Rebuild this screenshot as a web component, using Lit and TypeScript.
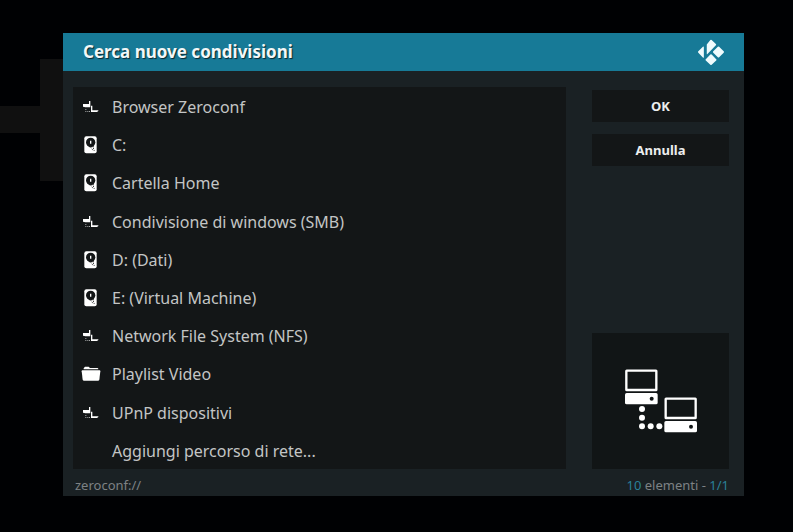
import { LitElement, html, svg, css, nothing } from "lit";
import { customElement, property, state } from "lit/decorators.js";

type Kind = "network" | "disk" | "folder" | "none";

interface Source {
  label: string;
  kind: Kind;
}

const SOURCES: Source[] = [
  { label: "Browser Zeroconf", kind: "network" },
  { label: "C:", kind: "disk" },
  { label: "Cartella Home", kind: "disk" },
  { label: "Condivisione di windows (SMB)", kind: "network" },
  { label: "D: (Dati)", kind: "disk" },
  { label: "E: (Virtual Machine)", kind: "disk" },
  { label: "Network File System (NFS)", kind: "network" },
  { label: "Playlist Video", kind: "folder" },
  { label: "UPnP dispositivi", kind: "network" },
  { label: "Aggiungi percorso di rete...", kind: "none" },
];

@customElement("source-icon")
export class SourceIcon extends LitElement {
  @property() kind: Kind = "none";

  static styles = css`
    :host { display: block; width: 20px; height: 20px; flex: none; }
    .glyph { display: block; width: 100%; height: 100%; fill: #fff; }
    .hole { fill: #131617; }
    .arm { fill: none; stroke: #131617; stroke-width: 3; stroke-dasharray: 3 3; }
    .faint { fill: #a9abab; }
  `;

  private shape() {
    switch (this.kind) {
      case "network":
        return svg`
          <path d="M6 21h18v-9h4v19H13l-7-2z"/>
          <path d="M30 26h4v14h18v2l-4 3H30z"/>
          <path class="faint" d="M13 36h3v3h-3zM13 42h3v3h-3zM19 42h3v3h-3zM24 42h3v3h-3z"/>`;
      case "disk":
        return svg`
          <rect x="10" y="4" width="37" height="51" rx="6"/>
          <circle class="hole" cx="29" cy="22" r="14"/>
          <path d="M27 17h4v9h-4z"/>
          <path class="arm" d="M24 35h14M29 37l8 10M35 34l5 13"/>`;
      case "folder":
        return svg`
          <path d="M8 16v-3l4-5h11l4 4h22q3 0 3 3v1z"/>
          <path d="M4 19h52q2 0 2 3l-3 25q-1 3-4 3H9q-3 0-4-3L2 22q0-3 2-3z"/>`;
      default:
        return nothing;
    }
  }

  render() {
    return html`<svg class="glyph" viewBox="0 0 60 60" aria-hidden="true">${this.shape()}</svg>`;
  }
}

@customElement("app-root")
export class AppRoot extends LitElement {
  @state() private selected = 0;

  static styles = css`
    :host {
      display: flex;
      position: relative;
      box-sizing: border-box;
      min-height: 100vh;
      padding: 33px 49px 36px 63px;
      background: #000103;
      font-family: "Noto Sans", "Open Sans", sans-serif;
      color: #c3c5c5;
    }
    .backdrop { position: absolute; left: 0; top: 59px; width: 63px; height: 122px; fill: #101010; }
    .dialog { position: relative; display: flex; flex-direction: column; flex: 1; min-width: 0; background: #1a2124; }
    .header {
      display: flex; align-items: center; justify-content: space-between;
      height: 38px; padding: 0 20px; background: #177a97;
    }
    .title { margin: 0; font-size: 17px; line-height: 24px; font-weight: 700; color: #f2f7f8; text-shadow: 1px 1px 1px #08262f; }
    .logo { width: 26px; height: 26px; fill: #f0fbfd; }
    .body {
      display: grid; flex: 1; grid-template-columns: minmax(0, 1fr) 137px;
      column-gap: 26px; padding: 16px 15px 0 10px;
    }
    .list { display: grid; grid-auto-rows: 1fr; margin: 0; padding: 0; list-style: none; background: #131617; }
    .item { display: flex; }
    .row {
      display: flex; align-items: center; gap: 11px; width: 100%;
      padding: 2px 8px 0; border: 0; background: none; color: inherit;
      font: 16px/24px "Noto Sans", "Open Sans", sans-serif; text-align: left;
    }
    .side { display: flex; flex-direction: column; gap: 12px; padding-top: 3px; }
    .action {
      height: 32px; padding: 0; border: 0; background: #131617; color: #eceeee;
      font: 700 13px/16px "Noto Sans", "Open Sans", sans-serif;
    }
    .preview { display: block; width: 100%; margin-top: auto; background: #111516; fill: #fff; }
    .screen { fill: none; stroke: #fff; stroke-width: 7; stroke-linejoin: round; }
    .hole { fill: #111516; }
    .footer {
      display: flex; align-items: center; justify-content: space-between;
      height: 27px; padding: 4px 15px 0 12px; box-sizing: border-box;
      font-size: 13px; line-height: 20px; color: #7d8284;
    }
    .accent { color: #2a8098; }
  `;

  private computer(x: number, y: number) {
    return svg`
      <rect class="screen" x=${x + 4} y=${y + 4} width="90" height="58" rx="1"/>
      <rect x=${x} y=${y + 71} width="98" height="34" rx="5"/>
      <circle class="hole" cx=${x + 80} cy=${y + 88} r="6"/>`;
  }

  render() {
    return html`
      <svg class="backdrop" viewBox="0 0 63 122" aria-hidden="true">
        <path d="M40 0h23v122H40V74H0V47h40z"/>
      </svg>
      <section class="dialog" role="dialog" aria-labelledby="title">
        <header class="header">
          <h1 class="title" id="title">Cerca nuove condivisioni</h1>
          <svg class="logo" viewBox="0 0 80 80" aria-hidden="true">
            <path d="M15 24q3-2 3 1v31q0 3-3 1L1 42q-2-2 0-4z"/>
            <path d="M27 17L38 3q2-2 4 0l13 12q2 2 0 4L29 46q-2 2-2-1z"/>
            <path d="M61 24q2-2 4 0l14 14q2 2 0 4L65 56q-2 2-4 0L47 42q-2-2 0-4z"/>
            <path d="M38 48q2-2 4 0l14 14q2 2 0 4L42 79q-2 2-4 0L24 66q-2-2 0-4z"/>
          </svg>
        </header>
        <div class="body">
          <ul class="list">
            ${SOURCES.map(
              (source, index) => html`
                <li class="item">
                  <button class="row" type="button" @click=${() => (this.selected = index)}>
                    <source-icon .kind=${source.kind}></source-icon>
                    <span>${source.label}</span>
                  </button>
                </li>`,
            )}
          </ul>
          <div class="side">
            <button class="action" type="button">OK</button>
            <button class="action" type="button">Annulla</button>
            <svg class="preview" viewBox="0 0 411 408" aria-hidden="true">
              ${this.computer(99, 109)} ${this.computer(217, 193)}
              <circle cx="150" cy="228" r="9"/>
              <circle cx="150" cy="254" r="9"/>
              <circle cx="150" cy="280" r="9"/>
              <circle cx="176" cy="280" r="9"/>
              <circle cx="202" cy="280" r="9"/>
            </svg>
          </div>
        </div>
        <footer class="footer">
          <span>zeroconf://</span>
          <span><span class="accent">${SOURCES.length}</span> elementi - <span class="accent">${this.selected + 1}/1</span></span>
        </footer>
      </section>
    `;
  }
}
